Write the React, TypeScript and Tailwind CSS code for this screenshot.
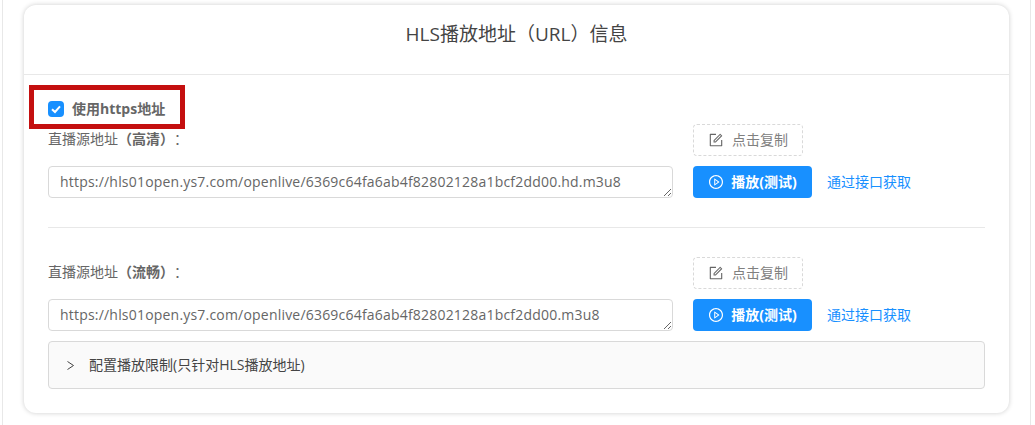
import React from 'react';
import { AiOutlineForm, AiOutlinePlayCircle } from 'react-icons/ai';

const fontStack = "font-['Open_Sans','Noto_Sans_CJK_SC',sans-serif]";

function UrlRow({ name, url }: { name: string; url: string }) {
  return (
    <div>
      <div className="flex items-center h-8">
        <div className="w-[645px] pb-0.5 text-sm text-[#666666] [text-spacing-trim:space-all]">
          直播源地址<span className="font-bold">（{name}）</span>：
        </div>
        <button className="flex items-center justify-center w-[110px] h-8 border border-dashed border-[#d9d9d9] rounded text-sm text-[#808080]">
          <AiOutlineForm className="w-4 h-4 mr-2 text-[#666666]" />
          点击复制
        </button>
      </div>
      <div className="flex items-start mt-2.5">
        <textarea
          readOnly
          value={url}
          rows={1}
          className="block w-[625px] h-8 px-[11px] py-[5px] border border-[#d9d9d9] rounded text-sm leading-[20px] tracking-[0.2px] text-[#666666] outline-none"
        />
        <button className="flex items-center justify-center ml-5 w-[119px] h-8 bg-[#1890ff] rounded text-sm font-bold text-white">
          <AiOutlinePlayCircle className="w-4 h-4 mr-[7px]" />
          播放(测试)
        </button>
        <a className="ml-[15px] leading-8 text-sm text-[#1890ff]">通过接口获取</a>
      </div>
    </div>
  );
}

export default function App() {
  return (
    <div className={`${fontStack} h-[425px] w-[1029px] ml-0.5 border-x border-[#e8e8e8] bg-white px-[21px] pt-[5px] overflow-hidden`}>
      <div className="relative w-[985px] rounded-xl bg-white shadow-[0_0_5px_rgba(0,0,0,0.2)]">
        {/* header */}
        <div className="flex items-center justify-center h-[70px] pb-2.5 border-b border-[#e8e8e8] text-[19px] text-[#444444]">
          HLS播放地址（URL）信息
        </div>

        <div className="px-6 pt-[26px] pb-6">
          <label className="flex items-center h-4 text-sm font-bold text-[#666666]">
            <span className="flex items-center justify-center w-4 h-4 mr-2 rounded-sm bg-[#1890ff]">
              <svg viewBox="0 0 16 16" className="w-4 h-4" fill="none" stroke="white" strokeWidth="2">
                <path d="M4 8.2 7 11l5-5.6" />
              </svg>
            </span>
            使用https地址
          </label>

          <div className="mt-[7px]">
            <UrlRow name="高清" url="https://hls01open.ys7.com/openlive/6369c64fa6ab4f82802128a1bcf2dd00.hd.m3u8" />
          </div>

          <div className="my-[29px] h-px bg-[#e8e8e8]" />

          <UrlRow name="流畅" url="https://hls01open.ys7.com/openlive/6369c64fa6ab4f82802128a1bcf2dd00.m3u8" />

          <div className="flex items-center mt-2.5 h-12 px-[18px] border border-[#d9d9d9] rounded bg-[#fafafa] text-sm text-[#444444]">
            <svg viewBox="0 0 7 9" className="w-[7px] h-[9px] mr-[15px]" fill="none" stroke="#444444" strokeWidth="1">
              <path d="M0.5 0.5 6.5 4.5 0.5 8.5" />
            </svg>
            配置播放限制(只针对HLS播放地址)
          </div>
        </div>

        {/* red annotation drawn over the screenshot */}
        <div className="absolute left-[5px] top-20 w-[156px] h-11 border-[5px] border-[#c40f0f]" />
      </div>
    </div>
  );
}
